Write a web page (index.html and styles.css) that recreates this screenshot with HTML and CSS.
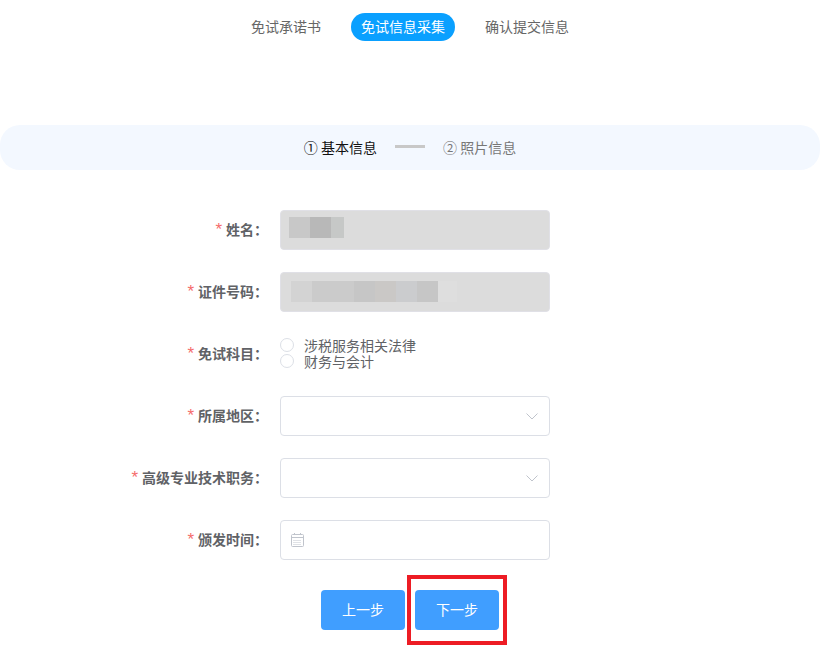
FILE: index.html
```html
<!DOCTYPE html>
<html lang="zh-CN">
<head>
    <meta charset="UTF-8">
    <meta name="viewport" content="width=device-width, initial-scale=1.0">
    <title>免试信息采集</title>
    <link rel="stylesheet" href="styles.css">
</head>
<body>
    <nav class="nav">
        <span class="nav-item">免试承诺书</span>
        <span class="nav-item active">免试信息采集</span>
        <span class="nav-item">确认提交信息</span>
    </nav>

    <div class="steps">
        <span class="step current">① 基本信息</span>
        <span class="step-line"></span>
        <span class="step">② 照片信息</span>
    </div>

    <form class="form">
        <div class="row">
            <label class="label"><i>*</i>姓名：</label>
            <div class="field disabled name-field">
                <span class="px w21 c1"></span><span class="px w21 c2"></span><span class="px w13 c3"></span>
            </div>
        </div>
        <div class="row">
            <label class="label"><i>*</i>证件号码：</label>
            <div class="field disabled id-field">
                <span class="px w21 c4"></span><span class="px w42 c5"></span><span class="px w21 c6"></span><span class="px w21 c7"></span><span class="px w21 c8"></span><span class="px w21 c6"></span><span class="px w19 c9"></span>
            </div>
        </div>
        <div class="row">
            <label class="label"><i>*</i>免试科目：</label>
            <div class="radios">
                <div class="radio"><span class="radio-dot"></span>涉税服务相关法律</div>
                <div class="radio"><span class="radio-dot"></span>财务与会计</div>
            </div>
        </div>
        <div class="row">
            <label class="label"><i>*</i>所属地区：</label>
            <div class="field select">
                <svg class="chevron" width="12" height="7" viewBox="0 0 12 7" fill="none" stroke="#c0c4cc" stroke-width="1"><path d="M0.5 0.5 L6 6 L11.5 0.5"></path></svg>
            </div>
        </div>
        <div class="row">
            <label class="label"><i>*</i>高级专业技术职务：</label>
            <div class="field select">
                <svg class="chevron" width="12" height="7" viewBox="0 0 12 7" fill="none" stroke="#c0c4cc" stroke-width="1"><path d="M0.5 0.5 L6 6 L11.5 0.5"></path></svg>
            </div>
        </div>
        <div class="row">
            <label class="label"><i>*</i>颁发时间：</label>
            <div class="field date">
                <svg width="14" height="14" viewBox="0 0 14 14" fill="none" stroke="#c0c4cc" stroke-width="1">
                    <rect x="0.5" y="1.5" width="12" height="12" rx="1"></rect>
                    <line x1="0.5" y1="4.5" x2="12.5" y2="4.5"></line>
                    <line x1="3.5" y1="0" x2="3.5" y2="2"></line>
                    <line x1="9.5" y1="0" x2="9.5" y2="2"></line>
                    <line x1="2.5" y1="7.5" x2="10.5" y2="7.5" stroke-dasharray="1 1"></line>
                    <line x1="2.5" y1="9.5" x2="10.5" y2="9.5" stroke-dasharray="1 1"></line>
                    <line x1="2.5" y1="11.5" x2="10.5" y2="11.5" stroke-dasharray="1 1"></line>
                </svg>
            </div>
        </div>
    </form>

    <div class="buttons">
        <button class="btn" type="button">上一步</button>
        <div class="btn-wrap">
            <button class="btn" type="button">下一步</button>
            <span class="highlight"></span>
        </div>
    </div>
</body>
</html>
```

FILE: styles.css
```css
body {
    margin: 0;
    background-color: white;
    font-family: "Noto Sans CJK SC", "Liberation Sans", sans-serif;
    font-size: 14px;
    color: #606266;
}
.nav {
    display: flex;
    justify-content: center;
    gap: 20px;
    padding-top: 13px;
}
.nav-item {
    height: 28px;
    line-height: 26px;
    padding: 0 10px;
    border-radius: 14px;
    color: #666;
}
.nav-item.active {
    background-color: #0aa0ff;
    color: white;
}
.steps {
    display: flex;
    justify-content: center;
    align-items: center;
    gap: 18px;
    height: 45px;
    margin-top: 84px;
    background-color: #f3f8ff;
    border-radius: 20px;
}
.step {
    padding-bottom: 2px;
    color: #777;
}
.step.current {
    color: #111;
}
.step-line {
    width: 30px;
    height: 3px;
    margin-bottom: 3px;
    background-color: #c8c8c8;
}
.form {
    display: flex;
    flex-direction: column;
    gap: 22px;
    margin-top: 40px;
}
.row {
    display: flex;
    align-items: center;
    height: 40px;
}
.label {
    width: 280px;
    padding-right: 12px;
    padding-bottom: 2px;
    box-sizing: border-box;
    text-align: right;
    font-weight: 700;
}
.label i {
    margin-right: 4px;
    font-style: normal;
    font-size: 17px;
    line-height: 1;
    font-family: "Liberation Sans", sans-serif;
    font-weight: 400;
    color: #f56c6c;
}
.field {
    display: flex;
    align-items: center;
    width: 270px;
    height: 40px;
    box-sizing: border-box;
    border: 1px solid #dcdfe6;
    border-radius: 4px;
}
.disabled {
    background-color: #dcdcdc;
    border-color: #e0e0e6;
}
.name-field {
    padding-left: 8px;
    padding-bottom: 6px;
}
.id-field {
    padding-left: 10px;
    padding-bottom: 2px;
}
.px {
    height: 21px;
}
.w13 { width: 13px; }
.w19 { width: 19px; }
.w21 { width: 21px; }
.w42 { width: 42px; }
.c1 { background-color: #c8c8c8; }
.c2 { background-color: #b8b8b8; }
.c3 { background-color: #c6c8c7; }
.c4 { background-color: #d3d3d3; }
.c5 { background-color: #cbcbcb; }
.c6 { background-color: #c6c6c6; }
.c7 { background-color: #cac8c6; }
.c8 { background-color: #cbccce; }
.c9 { background-color: #dedede; }
.radios {
    display: flex;
    flex-direction: column;
    padding-bottom: 2px;
}
.radio {
    display: flex;
    align-items: center;
    height: 16px;
    line-height: 16px;
}
.radio-dot {
    width: 14px;
    height: 14px;
    margin-right: 10px;
    box-sizing: border-box;
    border: 1px solid #dcdfe6;
    border-radius: 50%;
}
.select {
    justify-content: flex-end;
    padding-right: 11px;
}
.date {
    padding-left: 10px;
}
.buttons {
    display: flex;
    justify-content: center;
    gap: 10px;
    margin-top: 30px;
    padding-bottom: 25px;
}
.btn {
    display: block;
    width: 84px;
    height: 40px;
    padding: 0 0 2px;
    border: none;
    border-radius: 4px;
    background-color: #409eff;
    color: white;
    font-family: inherit;
    font-size: 14px;
}
.btn-wrap {
    position: relative;
    height: 40px;
}
.highlight {
    position: absolute;
    inset: -15px -8px;
    border: 4px solid #ed1c24;
}
```
